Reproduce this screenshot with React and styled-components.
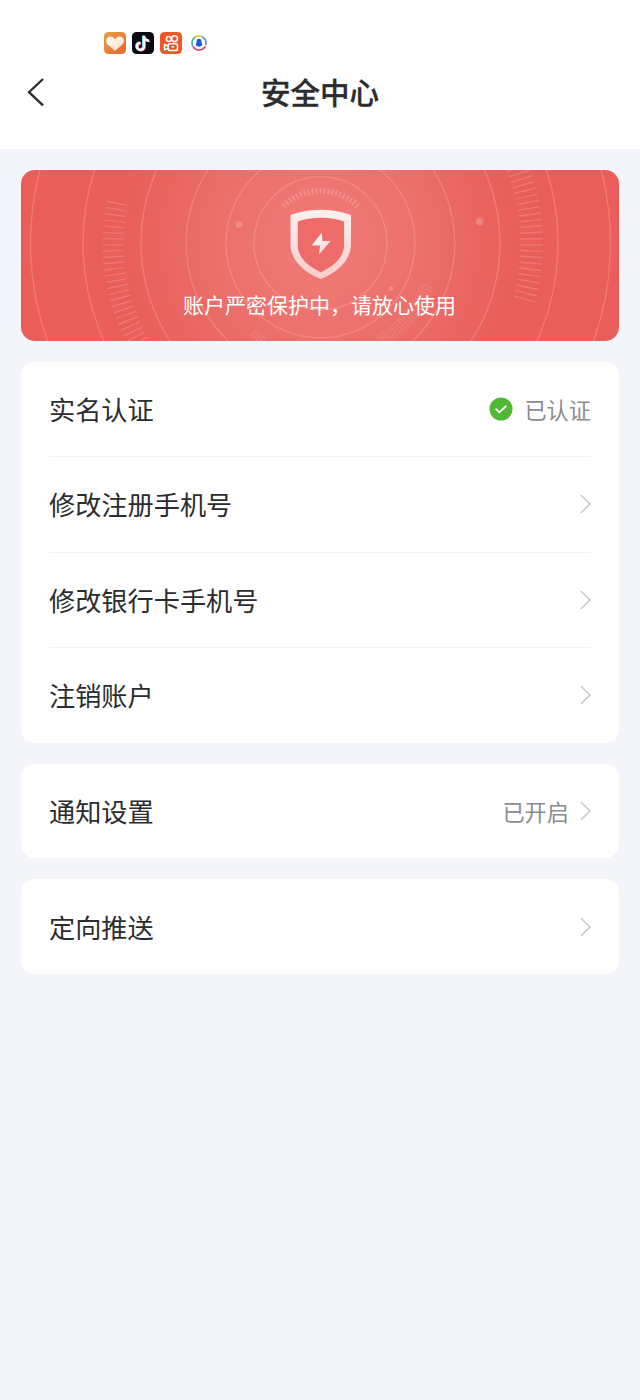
import React from "react";
import styled, { createGlobalStyle } from "styled-components";

const GlobalStyle = createGlobalStyle`
  * { box-sizing: border-box; }
  body {
    margin: 0;
    background: #f3f5fa;
    font-family: "Noto Sans CJK SC", "Noto Sans", sans-serif;
    color: #2b2c2e;
  }
`;

const Page = styled.div`
  width: 100%;
  max-width: 640px;
  min-height: 1400px;
  background: #f3f5fa;
`;

const Header = styled.header`
  height: 149.4px;
  padding-top: 32px;
  background: #fff;
`;

const StatusIcons = styled.div`
  display: flex;
  gap: 6px;
  padding-left: 104px;
  height: 22px;
  svg { display: block; }
`;

const TitleBar = styled.div`
  display: grid;
  grid-template-columns: 72px 1fr 72px;
  align-items: center;
  height: 76px;
`;

const BackButton = styled.button`
  display: flex;
  padding: 0 0 0 26px;
  border: 0;
  background: none;
`;

const Title = styled.h1`
  margin: 0 0 2px;
  text-align: center;
  font-size: 29.5px;
  line-height: 40px;
  font-weight: 500;
  -webkit-text-stroke: 0.35px #2b2c2e;
`;

const Content = styled.main`
  display: flex;
  flex-direction: column;
  gap: 21.2px;
  padding: 21px 21px 0;
`;

const Banner = styled.section`
  display: grid;
  height: 170.6px;
  border-radius: 14px;
  overflow: hidden;
  background: radial-gradient(circle at 50% 43%, #ef7b78 0, #ee7673 50px, #ec6e6a 110px, #ea6560 160px, #e95e59 205px, #e95e59 100%);
  > * { grid-area: 1 / 1; }
`;

const BannerText = styled.p`
  margin: 0 1px 22px 0;
  align-self: end;
  text-align: center;
  color: #fff;
  font-size: 21px;
  line-height: 30px;
`;

const Card = styled.section`
  padding: 0 28px;
  border-radius: 14px;
  background: #fff;
`;

const Row = styled.div`
  display: flex;
  align-items: center;
  justify-content: space-between;
  height: ${(p) => p.$height || 95.2}px;
  border-bottom: ${(p) => (p.$divider ? "1px solid #f2f2f4" : "0")};
`;

const Label = styled.span`
  font-size: 26.2px;
  line-height: 38px;
`;

const Side = styled.span`
  display: flex;
  align-items: center;
  gap: 11px;
  svg { display: block; }
`;

const Value = styled.span`
  color: #8b8c8f;
  font-size: 22.2px;
  line-height: 32px;
`;

const Chevron = () => (
  <svg width="11" height="20" viewBox="0 0 11 20" fill="none">
    <path d="M.8 1 10 10 .8 19" stroke="#cbcbcd" strokeWidth="1.7" />
  </svg>
);

const CheckBadge = () => (
  <svg width="24" height="24" viewBox="0 0 24 24" fill="none">
    <circle cx="12" cy="12" r="11.5" fill="#4fb936" />
    <path d="m6.600 11.600 3.700 3.700 7.100-6.400" stroke="#fff" strokeWidth="1.9" />
  </svg>
);

const HeartApp = () => (
  <svg width="22" height="22" viewBox="0 0 22 22">
    <defs>
      <linearGradient id="heartBg" x2="1" y2="1">
        <stop stopColor="#e3a04a" />
        <stop offset="1" stopColor="#ea662c" />
      </linearGradient>
      <linearGradient id="heartFill" x2="1" y2="1">
        <stop stopColor="#fff" />
        <stop offset="1" stopColor="#fbd9c2" />
      </linearGradient>
    </defs>
    <rect width="22" height="22" rx="4.5" fill="url(#heartBg)" />
    <path d="M11 18.700 3.500 12.500C-.3 8 4.800 2.300 9.100 5.600L11 7.200l2-1.600c4.500-3.300 9.500 2.200 5.500 6.800Z" fill="url(#heartFill)" />
  </svg>
);

const notePath = "M12 3.800v10.600a3.500 3.500 0 1 1-3.500-3.500M12 4c.2 2.700 2 4.400 4.900 4.700";
const MusicApp = () => (
  <svg width="22" height="22" viewBox="0 0 22 22" fill="none" strokeWidth="2.4">
    <rect width="22" height="22" rx="4.500" fill="#0b0912" />
    <path d={notePath} stroke="#5cdce0" transform="translate(-.8 -.3)" />
    <path d={notePath} stroke="#ed4b72" transform="translate(.8 .6)" />
    <path d={notePath} stroke="#fff" />
  </svg>
);

const CameraApp = () => (
  <svg width="22" height="22" viewBox="0 0 22 22" fill="none" stroke="#fff" strokeWidth="1.5">
    <rect width="22" height="22" rx="4.5" fill="#ee5725" stroke="none" />
    <circle cx="8.800" cy="7" r="2.400" />
    <circle cx="14.600" cy="6.700" r="2.900" />
    <rect x="8.200" y="11.700" width="9.300" height="6.800" rx="1.800" />
    <path d="m8 14-3.500-1.600v5.500L8 16.300" strokeLinejoin="round" />
    <path d="M11.500 15h2.600" />
  </svg>
);

const RingApp = () => (
  <svg width="22" height="22" viewBox="0 0 22 22" fill="none" strokeWidth="1.7">
    <path d="M4.600 13.800A7 7 0 0 1 7.200 5.100" stroke="#32b58a" />
    <path d="M7 5.200a7 7 0 0 1 6.500-.7" stroke="#e8c93e" />
    <path d="M13.500 4.500a7 7 0 0 1 4.300 8.500" stroke="#5b93e8" />
    <path d="M4.800 14.200a7 7 0 0 0 12.500 0" stroke="#e04867" />
    <path d="M11 6.800c2 0 2.500 1.600 2.500 3.400l.9 3.100-1.500.8c-1 .9-2.800.9-3.800 0l-1.500-.8.900-3.100c0-1.800.5-3.400 2.500-3.400Z" fill="#2158d8" />
  </svg>
);

const CX = 299.5;
const CY = 73.2;

const Ticks = ({ from, to, step, inner, outer, opacity, width = 1.4 }) => {
  const count = Math.round((to - from) / step) + 1;
  return (
    <g stroke="#fff" strokeOpacity={opacity} strokeWidth={width}>
      {Array.from({ length: count }, (_, i) => (
        <path
          key={i}
          d={`M${CX + inner} ${CY}H${CX + outer}`}
          transform={`rotate(${from + i * step} ${CX} ${CY})`}
        />
      ))}
    </g>
  );
};

const BannerArt = () => (
  <svg width="598" height="170.6" viewBox="0 0 598 170.6" fill="none">
    <defs>
      <linearGradient id="shieldEdge" x1="0" x2="0" y1="38" y2="109" gradientUnits="userSpaceOnUse">
        <stop stopColor="#fff" stopOpacity=".9" />
        <stop offset="1" stopColor="#fff" stopOpacity=".62" />
      </linearGradient>
      <linearGradient id="boltFill" x2="1" y2="1">
        <stop stopColor="#fff" />
        <stop offset="1" stopColor="#f9d0ce" />
      </linearGradient>
    </defs>
    <g stroke="#ffb5a8" strokeOpacity=".32" strokeWidth="1.4">
      {[66.5, 94.5, 134.3, 179.5, 237.5, 290].map((r) => (
        <circle key={r} cx={CX} cy={CY} r={r} />
      ))}
    </g>
    <Ticks from={151.5} to={191} step={1.65} inner={197} outer={218} opacity={0.16} />
    <Ticks from={-21} to={15.5} step={1.65} inner={200} outer={222.5} opacity={0.16} />
    <Ticks from={-134} to={-46} step={4.4} inner={49.5} outer={55.5} opacity={0.2} width={1.8} />
    <Ticks from={22} to={58} step={1.65} inner={108} outer={122} opacity={0.11} />
    <Ticks from={120} to={127} step={1.65} inner={108} outer={118} opacity={0.11} />
    <g fill="#fff" fillOpacity=".2">
      <circle cx="218" cy="54.5" r="3.2" />
      <circle cx="458.7" cy="51.5" r="3.7" />
      <circle cx="370" cy="118.5" r="2.3" />
    </g>
    <path d="M276.500 51C290 46.500 310 46.500 323.500 51V75c0 12-9 21.500-23.500 28.500-14.500-7-23.500-16.500-23.500-28.500Z" fill="#ed6b68" />
    <path
      fillRule="evenodd"
      fill="url(#shieldEdge)"
      d="M269.500 46q0-1 1.200-1.400C288 38.200 311.500 38.200 328.800 44.600q1.200.4 1.200 1.400V74c0 15-11.500 27-28.800 34.600q-1.400.6-2.800 0C281 101 269.500 89 269.500 74ZM276.800 51.500V75c0 11.500 8.700 20.300 23 27.200C314.200 95.300 323 86.500 323 75V51.500C308.500 46.500 291.200 46.500 276.800 51.500Z"
    />
    <path d="M300.800 62.500 290.700 75.600H299L298 84.500 309.700 71H301.500Z" fill="url(#boltFill)" />
  </svg>
);

export default function App() {
  return (
    <Page>
      <GlobalStyle />
      <Header>
        <StatusIcons>
          <HeartApp />
          <MusicApp />
          <CameraApp />
          <RingApp />
        </StatusIcons>
        <TitleBar>
          <BackButton aria-label="返回">
            <svg width="20" height="30" viewBox="0 0 20 30" fill="none">
              <path d="M17 2 3 15.2 17 28.3" stroke="#2b2c2e" strokeWidth="2.3" />
            </svg>
          </BackButton>
          <Title>安全中心</Title>
        </TitleBar>
      </Header>
      <Content>
        <Banner>
          <BannerArt />
          <BannerText>账户严密保护中，请放心使用</BannerText>
        </Banner>
        <Card>
          <Row $divider>
            <Label>实名认证</Label>
            <Side>
              <CheckBadge />
              <Value>已认证</Value>
            </Side>
          </Row>
          <Row $divider>
            <Label>修改注册手机号</Label>
            <Chevron />
          </Row>
          <Row $divider>
            <Label>修改银行卡手机号</Label>
            <Chevron />
          </Row>
          <Row>
            <Label>注销账户</Label>
            <Chevron />
          </Row>
        </Card>
        <Card>
          <Row $height={94.2}>
            <Label>通知设置</Label>
            <Side>
              <Value>已开启</Value>
              <Chevron />
            </Side>
          </Row>
        </Card>
        <Card>
          <Row $height={94.2}>
            <Label>定向推送</Label>
            <Chevron />
          </Row>
        </Card>
      </Content>
    </Page>
  );
}
